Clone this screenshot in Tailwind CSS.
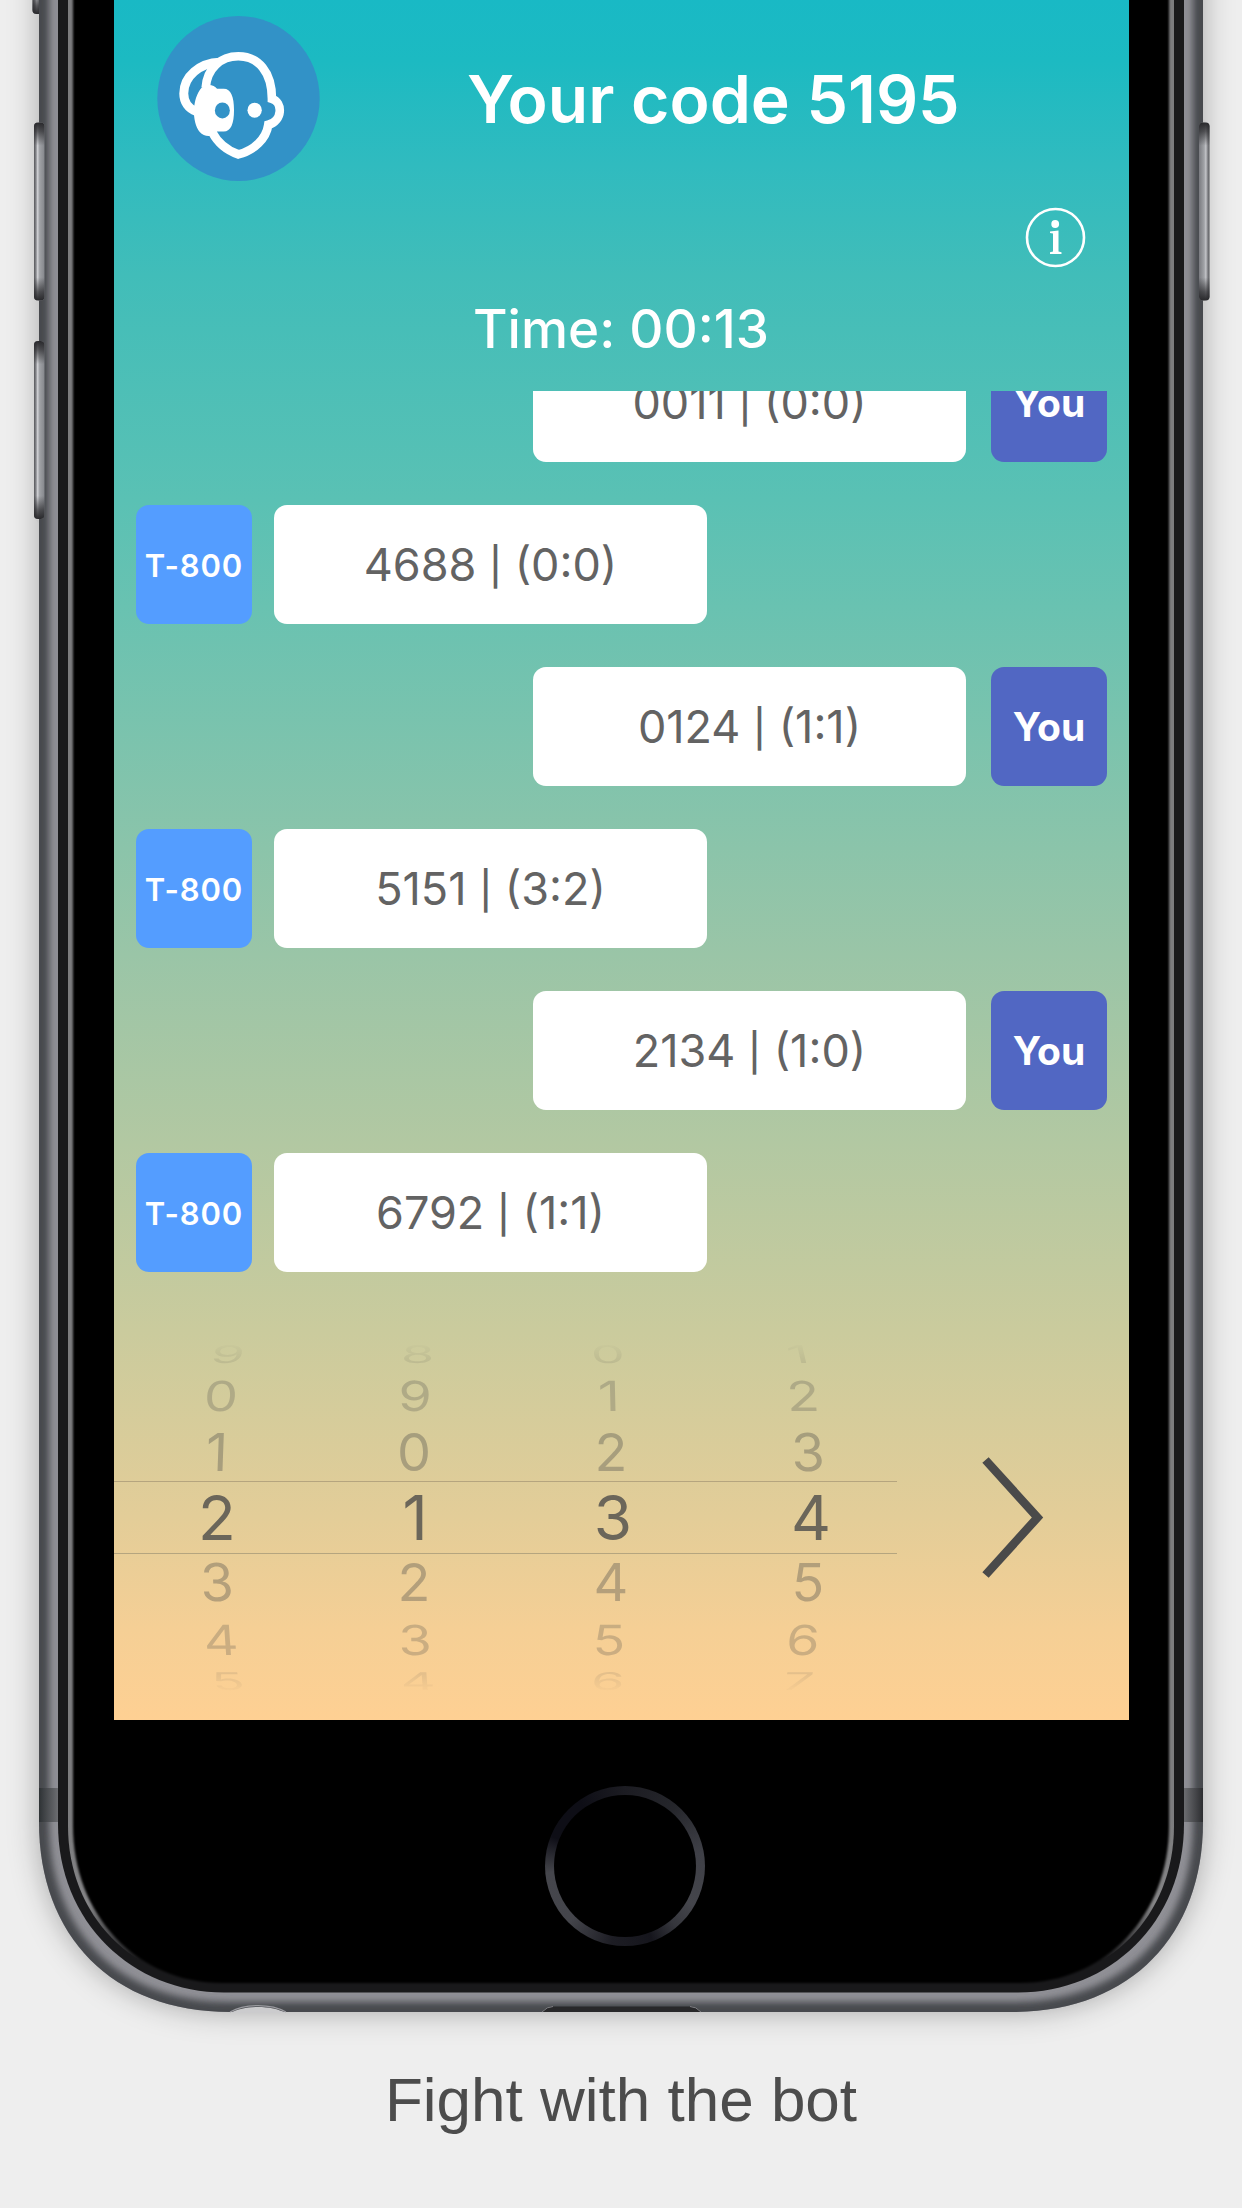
<!DOCTYPE html>
<html lang="en">
<head>
<meta charset="utf-8">
<title>Fight with the bot</title>
<script src="https://cdn.jsdelivr.net/npm/@tailwindcss/browser@4"></script>
</head>
<body class="relative h-[2208px] w-[1242px] overflow-hidden bg-[#eeeeee] font-['Inter',sans-serif]">

<!-- Phone hardware -->
<svg class="absolute inset-0" width="1242" height="2208" viewBox="0 0 1242 2208" fill="none">
  <defs>
    <filter id="soft" x="-10%" y="-10%" width="120%" height="120%"><feGaussianBlur stdDeviation="15"/></filter>
    <filter id="b5" x="-5%" y="-5%" width="110%" height="110%"><feGaussianBlur stdDeviation="3.5"/></filter>
    <filter id="b1" x="-5%" y="-5%" width="110%" height="110%"><feGaussianBlur stdDeviation="0.8"/></filter>
    <clipPath id="body"><path d="M39 -300H1203V1822C1203 1936 1130 2012 1012 2012H230C112 2012 39 1936 39 1822Z"/></clipPath>
    <linearGradient id="btn" x1="0" x2="1"><stop offset="0" stop-color="#55565a"/><stop offset=".2" stop-color="#8b8c90"/><stop offset=".35" stop-color="#d4d5d9"/><stop offset=".5" stop-color="#a2a4a8"/><stop offset="1" stop-color="#85878c"/></linearGradient>
    <linearGradient id="btnr" x1="1" x2="0"><stop offset="0" stop-color="#55565a"/><stop offset=".2" stop-color="#8b8c90"/><stop offset=".35" stop-color="#c4c5c9"/><stop offset=".5" stop-color="#a2a4a8"/><stop offset="1" stop-color="#7a7b80"/></linearGradient>
    <linearGradient id="btnv" x1="0" y1="0" x2="0" y2="1"><stop offset="0" stop-color="#29292c"/><stop offset=".05" stop-color="#29292c" stop-opacity=".7"/><stop offset=".13" stop-color="#29292c" stop-opacity="0"/><stop offset=".87" stop-color="#29292c" stop-opacity="0"/><stop offset=".95" stop-color="#29292c" stop-opacity=".7"/><stop offset="1" stop-color="#29292c"/></linearGradient>
    <linearGradient id="edge" gradientUnits="userSpaceOnUse" x1="0" y1="1820" x2="0" y2="1960"><stop offset="0" stop-color="#7c7c7e"/><stop offset=".6" stop-color="#858587"/><stop offset="1" stop-color="#19191b"/></linearGradient>
    <linearGradient id="bandl" x1="0" x2="1"><stop offset="0" stop-color="#2e3235"/><stop offset="1" stop-color="#6c6d71"/></linearGradient>
    <linearGradient id="bandr" x1="1" x2="0"><stop offset="0" stop-color="#2c2d30"/><stop offset="1" stop-color="#6c6d71"/></linearGradient>
  </defs>
  <path filter="url(#soft)" d="M39 -300H1203V1822C1203 1936 1130 2012 1012 2012H230C112 2012 39 1936 39 1822Z" fill="#000" fill-opacity=".3"/>
  <!-- side buttons -->
  <g>
    <rect x="32.500" y="-160" width="12" height="174" rx="4" fill="url(#btn)"/><rect x="32.500" y="-160" width="12" height="174" rx="4" fill="url(#btnv)"/>
    <path d="M36 122L39.500 118V122ZM1206 122L1202.500 118V122ZM36 520L39.500 524V520Z" fill="#c8c8c8"/>
  </g>
  <g clip-path="url(#body)">
    <rect y="-10" width="1242" height="2040" fill="#909096"/>
    <path filter="url(#b5)" d="M39 -300H1203V1822C1203 1936 1130 2012 1012 2012H230C112 2012 39 1936 39 1822Z" stroke="#47484d" stroke-width="20"/>
    <rect x="39" y="1788" width="19" height="34" fill="url(#bandl)"/>
    <rect x="1184" y="1788" width="19" height="34" fill="url(#bandr)"/>
  </g>
  <path d="M58 -300H1184V1824C1184 1922 1110 1992.500 1018 1992.500H224C132 1992.500 58 1922 58 1824Z" fill="#19191b"/>
  <path d="M68 -300H1174V1826C1174 1916 1108 1983 1020 1983H222C134 1983 68 1916 68 1826Z" fill="url(#edge)"/>
  <path filter="url(#b1)" d="M73 -300H1169V1826C1169 1914 1106 1983 1020 1983H222C136 1983 73 1914 73 1826Z" fill="#000"/>
  <rect x="34" y="122.500" width="10.500" height="178" rx="4" fill="url(#btn)"/><rect x="34" y="122.500" width="10.500" height="178" rx="4" fill="url(#btnv)"/>
  <rect x="34" y="341" width="10.500" height="178" rx="4" fill="url(#btn)"/><rect x="34" y="341" width="10.500" height="178" rx="4" fill="url(#btnv)"/>
  <rect x="1199" y="122.500" width="10.500" height="178" rx="4" fill="url(#btnr)"/><rect x="1199" y="122.500" width="10.500" height="178" rx="4" fill="url(#btnv)"/>
  <!-- headphone jack and charging port -->
  <path d="M230 2013C245 2005 271 2005 286 2013Z" fill="#cbcbcd"/>
  <path d="M230 2012C245 2003.500 271 2003.500 286 2012" stroke="#9a9a9f" stroke-width="1.200"/>
  <path d="M542 2012Q547 2006.500 553 2006.500H690Q696 2006.500 701 2012Z" fill="#28282a"/>
  <path d="M542 2012Q547 2006.500 553 2006.500M690 2006.500Q696 2006.500 701 2012" stroke="#7d7d81" stroke-width="1"/>
</svg>

<main class="relative flex flex-col items-center">
  <!-- App screen -->
  <section class="ml-[114px] self-start flex h-[1720px] w-[1015px] flex-col overflow-hidden bg-[linear-gradient(180deg,#19b9c5_0px,#1cbac2_60px,#30bbbf_165px,#41bdb9_275px,#5ac1b4_500px,#9ac5a7_955px,#cacb9d_1330px,#e3cd98_1517px,#f5cf95_1630px,#fed093_1720px)]">
    <header class="flex h-[182px] items-start pl-[43px] pt-4">
      <svg class="h-[165px] w-[163px] shrink-0" viewBox="472 47 489 496" fill="none">
        <ellipse cx="716.500" cy="295" rx="244" ry="248" fill="#3292c7"/>
        <path d="M618 262C622 205 662 168 716 168C776 168 817 215 817 296C850 306 850 362 806 374C800 415 764 451 716 463C680 450 654 428 638 397" stroke="#fff" stroke-width="26"/>
        <path d="M660 186C600 188 552 228 552 280C552 306 566 326 590 334" stroke="#fff" stroke-width="27"/>
        <path d="M606 262C620 250 643 252 652 266H672C694 266 703 290 703 330C703 370 694 394 672 394H652C642 412 614 412 600 396C576 366 576 296 606 262Z" fill="#fff"/>
        <ellipse cx="668" cy="331" rx="22.500" ry="24" fill="#3292c7"/>
        <ellipse cx="765" cy="330" rx="21.500" ry="22.500" fill="#fff"/>
      </svg>
      <h1 class="ml-[147px] mt-[43px] whitespace-nowrap text-[66px] font-semibold leading-[80px] text-white">Your code 5195</h1>
    </header>
    <div class="flex h-[110px] justify-end pr-[43px] pt-[25px]">
      <svg class="size-[61px]" viewBox="0 0 61 61" fill="none">
        <circle cx="30.500" cy="30.500" r="28.500" stroke="#fff" stroke-width="2.600"/>
        <circle cx="30.200" cy="17" r="3.900" fill="#fff"/>
        <path d="M25 24.500L33.500 23.500V44.500L36.500 45.200V47H25V45.200L28 44.500V26.500L25 26Z" fill="#fff"/>
      </svg>
    </div>
    <div class="h-[99px] whitespace-nowrap pl-[359px] text-[53px] font-medium leading-[75px] text-white"><span>Time: 00:13</span></div>

    <!-- Turn history -->
    <div class="flex h-[910px] flex-col overflow-hidden pl-[22px] pr-[22px]">
      <div class="-mt-[48px] flex flex-col gap-[43px] text-[45px] text-[#636363]">
        <div class="flex h-[119px] justify-end gap-[25px]"><div class="flex w-[433px] items-center justify-center rounded-[13px] bg-white"><p class="[word-spacing:-1px]">0011 <span class="inline-block translate-y-[2px] scale-y-[.83]">|</span> (0:0)</p></div><div class="flex w-[116px] items-center justify-center rounded-[13px] bg-[#5167c3] pt-[2px] text-[39px] font-bold text-white">You</div></div>
        <div class="flex h-[119px] gap-[22px]"><div class="flex w-[116px] items-center justify-center rounded-[13px] bg-[#549dff] pt-[3px] text-[31px] font-semibold tracking-[0.9px] text-white">T-800</div><div class="flex w-[433px] items-center justify-center rounded-[13px] bg-white"><p class="[word-spacing:-1px]">4688 <span class="inline-block translate-y-[2px] scale-y-[.83]">|</span> (0:0)</p></div></div>
        <div class="flex h-[119px] justify-end gap-[25px]"><div class="flex w-[433px] items-center justify-center rounded-[13px] bg-white"><p class="[word-spacing:-1px]">0124 <span class="inline-block translate-y-[2px] scale-y-[.83]">|</span> (1:1)</p></div><div class="flex w-[116px] items-center justify-center rounded-[13px] bg-[#5167c3] pt-[2px] text-[39px] font-bold text-white">You</div></div>
        <div class="flex h-[119px] gap-[22px]"><div class="flex w-[116px] items-center justify-center rounded-[13px] bg-[#549dff] pt-[3px] text-[31px] font-semibold tracking-[0.9px] text-white">T-800</div><div class="flex w-[433px] items-center justify-center rounded-[13px] bg-white"><p class="[word-spacing:-1px]">5151 <span class="inline-block translate-y-[2px] scale-y-[.83]">|</span> (3:2)</p></div></div>
        <div class="flex h-[119px] justify-end gap-[25px]"><div class="flex w-[433px] items-center justify-center rounded-[13px] bg-white"><p class="[word-spacing:-1px]">2134 <span class="inline-block translate-y-[2px] scale-y-[.83]">|</span> (1:0)</p></div><div class="flex w-[116px] items-center justify-center rounded-[13px] bg-[#5167c3] pt-[2px] text-[39px] font-bold text-white">You</div></div>
        <div class="flex h-[119px] gap-[22px]"><div class="flex w-[116px] items-center justify-center rounded-[13px] bg-[#549dff] pt-[3px] text-[31px] font-semibold tracking-[0.9px] text-white">T-800</div><div class="flex w-[433px] items-center justify-center rounded-[13px] bg-white"><p class="[word-spacing:-1px]">6792 <span class="inline-block translate-y-[2px] scale-y-[.83]">|</span> (1:1)</p></div></div>
      </div>
    </div>

    <!-- Code picker -->
    <div class="flex items-start pt-[40px]">
      <div class="flex w-[783px] flex-col text-center text-[54px] leading-none text-[#4a4a4a]">
        <div class="flex h-[26px] items-center gap-[150px] pl-[94px] opacity-15 [mask-image:linear-gradient(transparent,black)]"><span class="w-10 -skew-x-6 scale-y-[.45]">9</span><span class="w-10 -skew-x-2 scale-y-[.45]">8</span><span class="w-10 skew-x-2 scale-y-[.45]">0</span><span class="w-10 skew-x-6 scale-y-[.45]">1</span></div>
        <div class="flex h-[57px] items-center gap-[154px] pl-[87px] opacity-25"><span class="w-10 -skew-x-3 scale-y-[.77]">0</span><span class="w-10 -skew-x-1 scale-y-[.77]">9</span><span class="w-10 skew-x-1 scale-y-[.77]">1</span><span class="w-10 skew-x-3 scale-y-[.77]">2</span></div>
        <div class="flex h-[57px] items-center gap-[157px] pl-[83px] opacity-35"><span class="w-10 -skew-x-2 scale-y-[.97]">1</span><span class="w-10 scale-y-[.97]">0</span><span class="w-10 scale-y-[.97]">2</span><span class="w-10 skew-x-2 scale-y-[.97]">3</span></div>
        <div class="flex h-[73px] items-center gap-[158px] border-y border-[#b5a57f] pl-[83px] text-[62px] text-[#6b665a]"><span class="w-10">2</span><span class="w-10">1</span><span class="w-10">3</span><span class="w-10">4</span></div>
        <div class="flex h-[57px] items-center gap-[157px] pl-[83px] opacity-35"><span class="w-10 skew-x-2 scale-y-[.97]">3</span><span class="w-10 scale-y-[.97]">2</span><span class="w-10 scale-y-[.97]">4</span><span class="w-10 -skew-x-2 scale-y-[.97]">5</span></div>
        <div class="flex h-[57px] items-center gap-[154px] pl-[87px] opacity-25"><span class="w-10 skew-x-3 scale-y-[.77]">4</span><span class="w-10 skew-x-1 scale-y-[.77]">3</span><span class="w-10 -skew-x-1 scale-y-[.77]">5</span><span class="w-10 -skew-x-3 scale-y-[.77]">6</span></div>
        <div class="flex h-[26px] items-center gap-[150px] pl-[94px] opacity-15 [mask-image:linear-gradient(black,transparent)]"><span class="w-10 skew-x-6 scale-y-[.45]">5</span><span class="w-10 skew-x-2 scale-y-[.45]">4</span><span class="w-10 -skew-x-2 scale-y-[.45]">6</span><span class="w-10 -skew-x-6 scale-y-[.45]">7</span></div>
      </div>
      <svg class="ml-[84px] mt-[114px] h-[124px] w-[66px]" viewBox="981 1455 66 124" fill="none"><path d="M985.500 1460L1037.500 1517.500L985.500 1575" stroke="#4a4a4a" stroke-width="8.500"/></svg>
    </div>
  </section>

  <!-- Home button -->
  <div class="ml-[8px] mt-[66px] size-[160px] rounded-full bg-[conic-gradient(#1c1c22_0deg,#25262b_40deg,#3f4047_80deg,#44454b_120deg,#35363c_140deg,#15151c_160deg,#1d1d24_190deg,#44454b_225deg,#45464c_265deg,#0e0e16_292deg,#0e0e16_325deg,#1c1c22_360deg)] p-[9px]">
    <div class="size-full rounded-full bg-black"></div>
  </div>

  <p class="mt-[118px] font-['Liberation_Sans',sans-serif] text-[62px] leading-[72px] text-[#4c4c4c]">Fight with the bot</p>
</main>
</body>
</html>
